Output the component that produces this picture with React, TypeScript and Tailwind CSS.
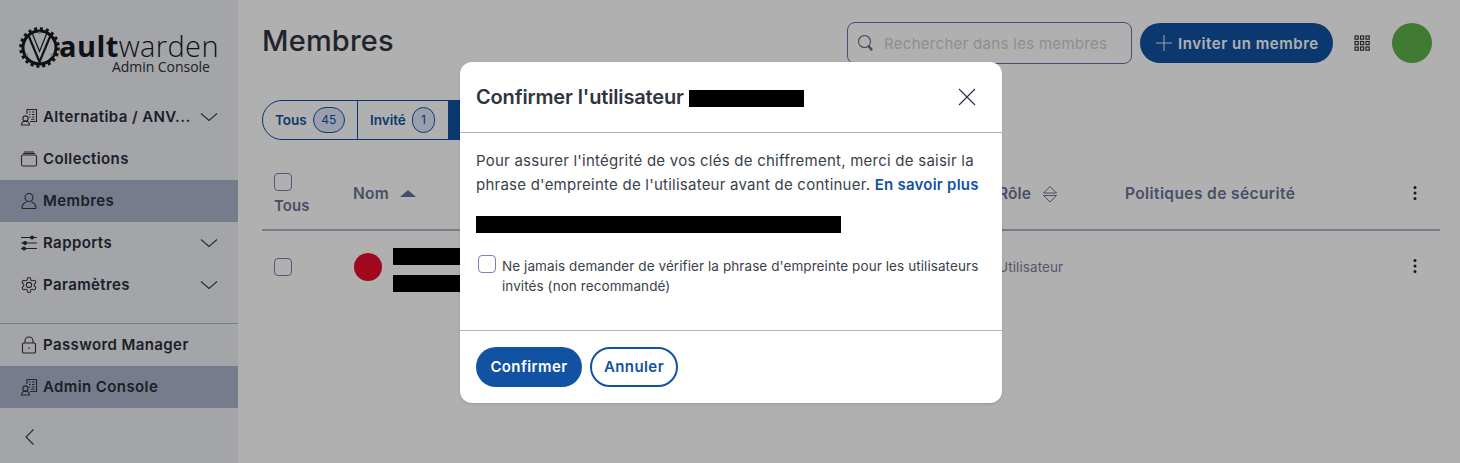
import React from "react";

const Bars = () => <span className="block h-[17px] bg-black" />;

const Chevron = () => (
  <svg width="18" height="10" viewBox="0 0 18 10" fill="none" stroke="#3a3f4c" strokeWidth="1.1" className="shrink-0">
    <path d="M1 1.500 9 8.500 17 1.500" />
  </svg>
);

const BuildingIcon = () => (
  <svg width="18" height="18" viewBox="0 0 18 18" fill="none" stroke="#3a3340" strokeWidth="1.1">
    <path d="M7 6V1.500h9.500V13.500H10" />
    <path d="M9 4h1.500M12 4h2.500M9 6.500h1.500M12 6.500h2.500M9 9h1.500M12 9h2.500M11 11.300h3.500" />
    <circle cx="5.500" cy="10.500" r="2.600" />
    <path d="M1.500 17c0-2.600 1.600-3.700 4-3.700s4 1.100 4 3.700z" />
  </svg>
);

const CollectionIcon = () => (
  <svg width="18" height="18" viewBox="0 0 18 18" fill="none" stroke="#3a3340" strokeWidth="1.1">
    <rect x="1.500" y="5" width="15" height="11" rx="1.500" />
    <path d="M2.800 3.500h12.400M4 2h10" />
  </svg>
);

const UserIcon = () => (
  <svg width="18" height="18" viewBox="0 0 18 18" fill="none" stroke="#3a3340" strokeWidth="1.1">
    <ellipse cx="9" cy="5.500" rx="4" ry="4" />
    <path d="M2 16.500c0-4 2.500-6 4.500-6.500M16 16.500c0-4-2.500-6-4.500-6.500M2 16.500h14" />
  </svg>
);

const SlidersIcon = () => (
  <svg width="18" height="18" viewBox="0 0 18 18" fill="#292e3a" stroke="#292e3a" strokeWidth="1.100">
    <path d="M1 3.500h16M1 9h16M1 14.500h16" />
    <circle cx="12" cy="3.500" r="1.500" />
    <circle cx="5" cy="9" r="1.500" />
    <circle cx="4" cy="14.500" r="1.500" />
  </svg>
);

const GearIcon = () => (
  <svg width="18" height="18" viewBox="0 0 24 24" fill="none" stroke="#3a3340" strokeWidth="1.400">
    <path d="M12.220 2h-.44a2 2 0 0 0-2 2v.18a2 2 0 0 1-1 1.730l-.43.250a2 2 0 0 1-2 0l-.15-.08a2 2 0 0 0-2.730.730l-.22.380a2 2 0 0 0 .730 2.730l.15.100a2 2 0 0 1 1 1.720v.510a2 2 0 0 1-1 1.740l-.15.090a2 2 0 0 0-.730 2.730l.22.380a2 2 0 0 0 2.730.730l.15-.08a2 2 0 0 1 2 0l.43.250a2 2 0 0 1 1 1.730V20a2 2 0 0 0 2 2h.44a2 2 0 0 0 2-2v-.18a2 2 0 0 1 1-1.730l.43-.250a2 2 0 0 1 2 0l.15.080a2 2 0 0 0 2.730-.730l.22-.390a2 2 0 0 0-.730-2.730l-.15-.080a2 2 0 0 1-1-1.740v-.500a2 2 0 0 1 1-1.740l.15-.090a2 2 0 0 0 .730-2.730l-.22-.380a2 2 0 0 0-2.730-.730l-.15.080a2 2 0 0 1-2 0l-.43-.250a2 2 0 0 1-1-1.730V4a2 2 0 0 0-2-2z" />
    <circle cx="12" cy="12" r="3.500" />
  </svg>
);

const LockIcon = () => (
  <svg width="18" height="18" viewBox="0 0 18 18" fill="none" stroke="#3a3340" strokeWidth="1.100">
    <rect x="2.500" y="7" width="13" height="10" rx="1" />
    <path d="M5 7V5a4 4 0 0 1 8 0v2" />
    <path d="M9 11.500v1.500" />
  </svg>
);

const NavRow = ({ icon, label, chevron, active }: { icon: React.ReactNode; label: string; chevron?: boolean; active?: boolean }) => (
  <div className={`flex h-[42px] items-center pl-5 pr-5 ${active ? "bg-[#abb4ca]" : ""}`}>
    <span className="mr-[5px] flex w-[18px] shrink-0 justify-center">{icon}</span>
    <span className="flex-1 truncate text-[15px] font-semibold tracking-[0.4px] text-[#292e3a]">{label}</span>
    {chevron && <Chevron />}
  </div>
);

const Logo = () => (
  <div className="flex h-[96px] items-start pl-[19px] pt-[27px]">
    <svg width="41" height="41" viewBox="0 0 41 41" fill="none" className="shrink-0">
      <circle cx="20.500" cy="20.500" r="16.500" stroke="#17191d" strokeWidth="3" />
      <circle cx="20.500" cy="20.500" r="18.800" stroke="#17191d" strokeWidth="3" strokeDasharray="3 2.900" />
      <path d="M9.500 8.500 20.500 35 31.500 8.500" stroke="#17191d" strokeWidth="2.200" />
      <path d="M13.500 7 20.500 24.500 27.500 7" stroke="#17191d" strokeWidth="1.200" />
      <circle cx="20.500" cy="5.800" r="1.300" fill="#a3a5a9" />
      <circle cx="8" cy="28" r="1.300" fill="#a3a5a9" />
      <circle cx="33" cy="28" r="1.300" fill="#a3a5a9" />
    </svg>
    <div className="flex flex-col [font-family:'Open_Sans',sans-serif] text-[#17191d]">
      <div className="ml-[-1px] flex h-[37px] items-end text-[29px] leading-[37px] tracking-[0.4px]">
        <span className="font-bold">ault</span>
        <span className="font-light">warden</span>
      </div>
      <div className="-mt-[5px] ml-[52px] text-[14px] leading-[16px] tracking-[-0.05px] text-[#2b2e35]">Admin Console</div>
    </div>
  </div>
);

const Sidebar = () => (
  <aside className="flex h-full w-[238px] shrink-0 flex-col bg-[#eceff5]">
    <Logo />
    <NavRow icon={<BuildingIcon />} label="Alternatiba / ANV..." chevron />
    <NavRow icon={<CollectionIcon />} label="Collections" />
    <NavRow icon={<UserIcon />} label="Membres" active />
    <NavRow icon={<SlidersIcon />} label="Rapports" chevron />
    <NavRow icon={<GearIcon />} label="Paramètres" chevron />
    <div className="mt-[17px] border-t border-[#aeb4c4]">
      <NavRow icon={<LockIcon />} label="Password Manager" />
      <NavRow icon={<BuildingIcon />} label="Admin Console" active />
    </div>
    <div className="flex flex-1 items-center pl-6">
      <svg width="11" height="18" viewBox="0 0 11 18" fill="none" stroke="#3a3f4c" strokeWidth="1.200" className="mt-[2px]">
        <path d="M9.500 1.500 2 9l7.500 7.500" />
      </svg>
    </div>
  </aside>
);

const Waffle = () => (
  <svg width="16" height="16" viewBox="0 0 16 16" fill="none" stroke="#2b2a2a" strokeWidth="1.100">
    {[1, 6.500, 12].map((x) =>
      [1, 6.500, 12].map((y) => <rect key={`${x}-${y}`} x={x} y={y} width="3.200" height="3.200" />),
    )}
  </svg>
);

const Dots = ({ className = "" }: { className?: string }) => (
  <svg width="4" height="16" viewBox="0 0 4 16" fill="#20232b" className={className}>
    <circle cx="2" cy="2.500" r="1.500" />
    <circle cx="2" cy="8" r="1.500" />
    <circle cx="2" cy="13.500" r="1.500" />
  </svg>
);

const Box = ({ className = "" }: { className?: string }) => (
  <span className={`block h-[18px] w-[18px] rounded-[4px] border border-[#7585aa] bg-transparent ${className}`} />
);

const Header = () => (
  <div className="flex h-[100px] items-start">
    <h1 className="mt-[22px] flex-1 text-[29px] font-medium leading-[38px] tracking-[0.2px] text-[#2f3542]">Membres</h1>
    <div className="mt-[22px] flex h-[42px] w-[285px] items-center rounded-[8px] border border-[#5e749f] pl-[9px]">
      <svg width="18" height="18" viewBox="0 0 18 18" fill="none" stroke="#5f6c88" strokeWidth="1.100">
        <circle cx="7.500" cy="7.500" r="6" />
        <path d="M11.500 12 15 16.200" strokeWidth="2.400" />
      </svg>
      <span className="ml-[9px] pt-[2px] text-[15px] tracking-[0.3px] text-[#cecece]">Rechercher dans les membres</span>
    </div>
    <div className="ml-2 mt-[23px] flex h-10 w-[193px] items-center rounded-[20px] bg-[#1252a3] pl-[15px] text-white">
      <svg width="18" height="18" viewBox="0 0 18 18" stroke="#dbe4f3" strokeWidth="1.100">
        <path d="M9 1v16M1 9h16" />
      </svg>
      <span className="ml-[5px] pt-[2px] text-[15px] font-semibold tracking-[0.55px]">Inviter un membre</span>
    </div>
    <span className="ml-[21px] mt-[35px] block">
      <Waffle />
    </span>
    <span className="ml-[22px] mr-2 mt-[23px] block h-10 w-10 rounded-full bg-[#5eb14b]" />
  </div>
);

const Tabs = () => (
  <div className="flex h-10 w-[300px] overflow-hidden rounded-l-[20px] border border-[#1252a3] text-[13.500px] font-semibold text-[#1252a3]">
    <div className="flex w-[95px] items-center gap-[6px] border-r border-[#1252a3] pl-3">
      <span>Tous</span>
      <span className="flex h-[26px] w-8 items-center justify-center rounded-[13px] border border-[#1252a3] bg-[#dfe6ff] text-[12px] font-normal">45</span>
    </div>
    <div className="flex w-[90px] items-center gap-[6px] pl-3">
      <span>Invité</span>
      <span className="flex h-[26px] w-[23px] items-center justify-center rounded-[13px] border border-[#1252a3] bg-[#dfe6ff] text-[12px] font-normal">1</span>
    </div>
    <div className="flex-1 bg-[#1252a3]" />
  </div>
);

const Table = () => (
  <div className="mt-[21px]">
    <div className="grid h-[70px] grid-cols-[91px_645px_127px_1fr_27px] items-center border-b-2 border-[#acb7ce] pb-[2px] text-[15.500px] font-semibold text-[#677398]">
      <div className="pl-3">
        <Box />
        <div className="mt-[5px] text-[15px] leading-[20px] tracking-[0.1px]">Tous</div>
      </div>
      <div className="flex items-center gap-[11px]">
        <span className="tracking-[0.3px]">Nom</span>
        <svg width="16" height="8" viewBox="0 0 16 8" fill="#677398"><path d="M8 0l8 7H0z" /></svg>
      </div>
      <div className="flex items-center gap-[11px]">
        <span className="tracking-[0.1px]">Rôle</span>
        <svg width="16" height="18" viewBox="0 0 16 18" fill="none" stroke="#677398" strokeWidth="1"><path d="M1.500 8 8 1.500 14.500 8zM1.500 10.500h13L8 17z" /></svg>
      </div>
      <div className="tracking-[0.4px]">Politiques de sécurité</div>
      <Dots className="mb-[2px]" />
    </div>
    <div className="grid h-[72px] grid-cols-[91px_132px_513px_127px_1fr_27px] items-center">
      <div className="pl-3"><Box className="-mt-[1px]" /></div>
      <div className="flex items-center pl-px">
        <span className="h-7 w-7 rounded-full bg-[#e80e2b]" />
        <div className="ml-[11px] mt-[6px] flex w-[92px] flex-col gap-[10px]"><Bars /><Bars /></div>
      </div>
      <div />
      <div className="text-[13.500px] tracking-[0.1px] text-[#7a8296]">Utilisateur</div>
      <div />
      <Dots className="mb-[2px]" />
    </div>
  </div>
);

const Modal = () => (
  <div className="absolute inset-0 flex justify-center bg-black/[0.31] pl-[2px] pt-[62px]">
    <div className="h-[341px] w-[542px] rounded-xl bg-white shadow-sm">
      <div className="flex h-[71px] items-center justify-between border-b border-[#a9b4c9] pl-4 pr-[26px]">
        <div className="flex items-center">
          <span className="text-[20px] font-semibold tracking-[-0.15px] text-[#2f3542]">Confirmer l'utilisateur</span>
          <span className="ml-[5px] mt-[3px] block h-[17px] w-[115px] bg-black" />
        </div>
        <svg width="18" height="18" viewBox="0 0 18 18" fill="none" stroke="#26304a" strokeWidth="1.100"><path d="M1 1l16 16M17 1 1 17" /></svg>
      </div>
      <div className="h-[198px] border-b border-[#a9b4c9] px-4 pt-4">
        <p className="w-[515px] text-[15px] leading-6 tracking-[0.24px] text-[#3a3f4b]">
          Pour assurer l'intégrité de vos clés de chiffrement, merci de saisir la phrase d'empreinte de l'utilisateur avant de continuer.{" "}
          <span className="font-semibold text-[#1252a3]">En savoir plus</span>
        </p>
        <span className="mt-[19px] block h-[17px] w-[365px] bg-black" />
        <div className="ml-[2px] mt-[22px] flex items-start">
          <Box className="shrink-0 border-[#5a6d96]" />
          <p className="ml-[6px] mt-px w-[490px] text-[13.500px] leading-5 tracking-[0.08px] text-[#3a3f4b]">
            Ne jamais demander de vérifier la phrase d'empreinte pour les utilisateurs invités (non recommandé)
          </p>
        </div>
      </div>
      <div className="flex items-start gap-2 px-4 pt-4">
        <div className="flex h-10 w-[106px] items-center justify-center rounded-[20px] bg-[#1252a3] text-[15px] font-semibold tracking-[0.4px] text-white">Confirmer</div>
        <div className="flex h-10 w-[88px] items-center justify-center rounded-[20px] border-2 border-[#1252a3] text-[15px] font-semibold tracking-[0.4px] text-[#1252a3]">Annuler</div>
      </div>
    </div>
  </div>
);

export default function App() {
  return (
    <div className="relative flex h-[463px] w-[1460px] overflow-hidden bg-white [font-family:Inter,sans-serif]">
      <Sidebar />
      <main className="min-w-0 flex-1 pl-6 pr-5">
        <Header />
        <Tabs />
        <Table />
      </main>
      <Modal />
    </div>
  );
}
